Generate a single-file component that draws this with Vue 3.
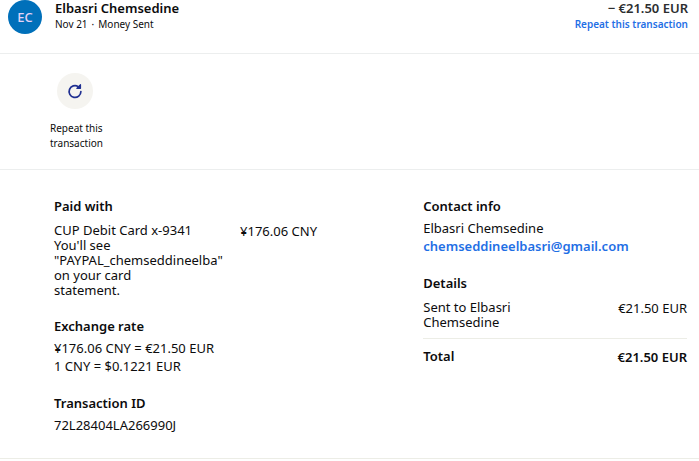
<script setup>
const transaction = {
  initials: 'EC',
  name: 'Elbasri Chemsedine',
  date: 'Nov 21',
  status: 'Money Sent',
  sent: '€21.50 EUR',
  paid: '¥176.06 CNY',
  email: 'chemseddineelbasri@gmail.com',
  id: '72L28404LA266990J',
}
</script>

<template>
  <main class="transaction">
    <header class="summary">
      <span class="avatar">{{ transaction.initials }}</span>
      <div class="who">
        <h1 class="name">{{ transaction.name }}</h1>
        <p class="meta">
          <span>{{ transaction.date }}</span>
          <span>·</span>
          <span>{{ transaction.status }}</span>
        </p>
      </div>
      <div class="amount-block">
        <p class="amount">− {{ transaction.sent }}</p>
        <a class="link small" href="#repeat">Repeat this transaction</a>
      </div>
    </header>

    <section class="actions">
      <button class="action" type="button">
        <span class="action-icon">
          <svg width="16" height="16" viewBox="0 0 16 16" fill="none" aria-hidden="true">
            <path d="M13.9 8.6A5.9 5.9 0 1 1 11.2 3.6" stroke="#1f2f91" stroke-width="1.7" stroke-linecap="round" />
            <path d="M13.5 1.6V5.3H9.8Z" fill="#1f2f91" stroke="#1f2f91" stroke-width="1.2" stroke-linejoin="round" />
          </svg>
        </span>
        <span class="action-label">Repeat this transaction</span>
      </button>
    </section>

    <section class="details">
      <div class="column">
        <section class="group">
          <h2>Paid with</h2>
          <div class="row funding">
            <p class="source">
              CUP Debit Card x-9341<br />
              You'll see "PAYPAL_chemseddineelba" on your card statement.
            </p>
            <p class="value">{{ transaction.paid }}</p>
          </div>
        </section>
        <section class="group">
          <h2>Exchange rate</h2>
          <p class="line">{{ transaction.paid }} = {{ transaction.sent }}</p>
          <p class="line">1 CNY = $0.1221 EUR</p>
        </section>
        <section class="group">
          <h2>Transaction ID</h2>
          <p class="line">{{ transaction.id }}</p>
        </section>
      </div>

      <div class="column">
        <section class="group">
          <h2>Contact info</h2>
          <p class="line">{{ transaction.name }}</p>
          <p class="line"><a class="link" :href="`mailto:${transaction.email}`">{{ transaction.email }}</a></p>
        </section>
        <section class="group">
          <h2>Details</h2>
          <div class="row">
            <p class="recipient">Sent to {{ transaction.name }}</p>
            <p class="value">{{ transaction.sent }}</p>
          </div>
          <div class="row total">
            <p>Total</p>
            <p class="value">{{ transaction.sent }}</p>
          </div>
        </section>
      </div>
    </section>
  </main>
</template>

<style>
body {
  background: #fff;
}
</style>

<style scoped>
.transaction {
  font-family: "Noto Sans", "Open Sans", sans-serif;
  font-size: 13px;
  line-height: 15px;
  color: #0c0c0d;
}
h1,
h2,
p {
  margin: 0;
}
.summary {
  display: flex;
  align-items: flex-start;
  height: 53px;
  padding: 0 11px 0 8px;
  border-bottom: 1px solid #eceeee;
}
.avatar {
  display: flex;
  align-items: center;
  justify-content: center;
  width: 34px;
  height: 34px;
  border-radius: 50%;
  background: #0070ba;
  color: #e3d3f7;
  font-size: 13px;
  font-weight: 500;
}
.who {
  flex: 1;
  margin-left: 13px;
}
.name,
.amount {
  font-size: 13px;
  font-weight: 600;
  line-height: 16px;
}
.meta {
  display: flex;
  gap: 4px;
  font-size: 10px;
  line-height: 16px;
}
.amount-block {
  text-align: right;
}
.amount {
  color: #2c2e2f;
}
.link {
  color: #1f6fe5;
  font-weight: 600;
  text-decoration: none;
}
.small {
  display: block;
  font-size: 10px;
  line-height: 16px;
}
.actions {
  display: flex;
  padding: 19px 50px 18px;
  border-bottom: 1px solid #eceeee;
}
.action {
  display: flex;
  flex-direction: column;
  gap: 12px;
  padding: 0;
  border: 0;
  background: none;
  color: inherit;
  font: inherit;
  text-align: left;
  cursor: pointer;
}
.action-icon {
  display: flex;
  align-items: center;
  justify-content: center;
  width: 36px;
  height: 36px;
  margin-left: 7px;
  border-radius: 50%;
  background: #f5f4f0;
}
.action-label {
  width: 54px;
  font-size: 10px;
  line-height: 15px;
}
.details {
  display: grid;
  grid-template-columns: 7fr 5fr;
  padding: 28px 12px 24px 54px;
  border-bottom: 1px solid #ecede6;
}
.column {
  display: flex;
  flex-direction: column;
  gap: 20px;
}
h2 {
  font-size: 13px;
  font-weight: 600;
  line-height: 16px;
  margin-bottom: 5px;
}
.line {
  line-height: 18px;
}
.row {
  display: flex;
  justify-content: space-between;
  padding-top: 4px;
}
.funding {
  width: 263px;
}
.source {
  width: 140px;
}
.recipient {
  width: 120px;
}
.value {
  white-space: nowrap;
  line-height: 17px;
}
.total {
  margin-top: 8px;
  padding-top: 10px;
  border-top: 1px solid #ecede6;
}
.total p {
  font-weight: 600;
}
</style>
